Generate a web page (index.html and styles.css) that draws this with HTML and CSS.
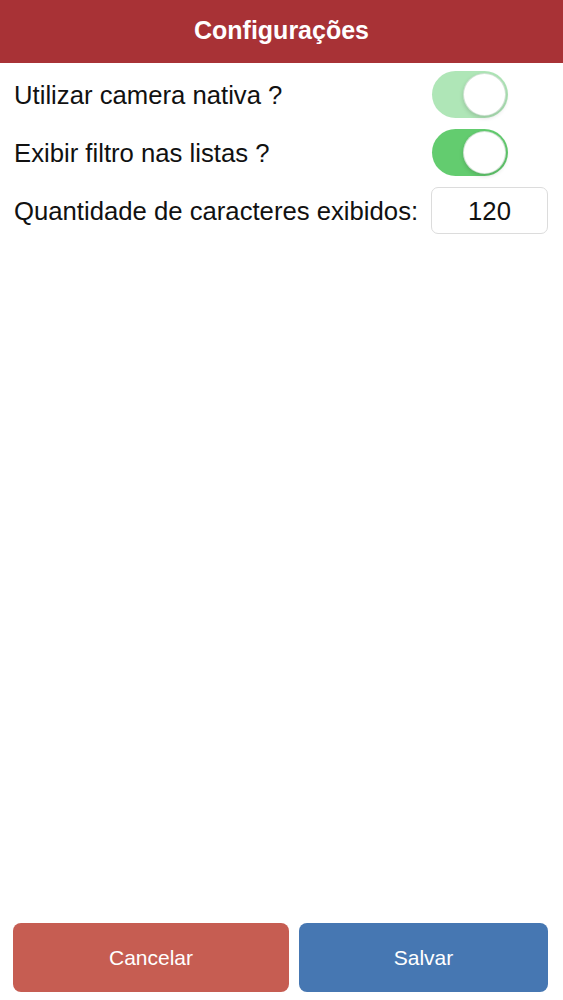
FILE: index.html
```html
<!DOCTYPE html>
<html lang="pt">
<head>
<meta charset="utf-8">
<title>Configurações</title>
<link rel="stylesheet" href="styles.css">
</head>
<body>
<div class="app">
  <header class="header">Configurações</header>
  <main class="content">
    <div class="row">
      <span class="label">Utilizar camera nativa ?</span>
      <span class="toggle toggle-light"><span class="knob"></span></span>
    </div>
    <div class="row">
      <span class="label">Exibir filtro nas listas ?</span>
      <span class="toggle toggle-on"><span class="knob"></span></span>
    </div>
    <div class="row">
      <span class="label">Quantidade de caracteres exibidos:</span>
      <span class="input">120</span>
    </div>
  </main>
  <footer class="footer">
    <button class="btn btn-cancel">Cancelar</button>
    <button class="btn btn-save">Salvar</button>
  </footer>
</div>
</body>
</html>
```

FILE: styles.css
```css
html, body {
  margin: 0;
  padding: 0;
  background: #ffffff;
}
body {
  font-family: "Liberation Sans", Arial, sans-serif;
  color: #111111;
}
.app {
  width: 563px;
  height: 1000px;
  display: flex;
  flex-direction: column;
}
.header {
  height: 63px;
  background: #a83236;
  color: #ffffff;
  font-size: 25px;
  font-weight: bold;
  display: flex;
  align-items: center;
  justify-content: center;
  padding-bottom: 2px;
  box-sizing: border-box;
}
.content {
  flex: 1;
  padding: 8px 15px 0 14px;
  display: flex;
  flex-direction: column;
  gap: 11px;
}
.row {
  height: 47px;
  display: flex;
  align-items: center;
  justify-content: space-between;
}
.label {
  font-size: 25.7px;
  padding-top: 2px;
}
.toggle {
  width: 76px;
  height: 47px;
  border-radius: 24px;
  display: flex;
  align-items: center;
  justify-content: flex-end;
  padding: 2px;
  box-sizing: border-box;
  margin-right: 40px;
}
.toggle-light {
  background: #afe6b7;
}
.toggle-on {
  background: #63cc6f;
}
.knob {
  width: 43px;
  height: 43px;
  border-radius: 50%;
  background: #ffffff;
  box-sizing: border-box;
  border: 1px solid rgba(0, 100, 20, 0.18);
  box-shadow: 0 2px 4px rgba(0, 0, 0, 0.15);
}
.input {
  width: 117px;
  height: 47px;
  border: 1px solid #dcdcdc;
  border-radius: 7px;
  box-sizing: border-box;
  display: flex;
  align-items: center;
  justify-content: center;
  font-size: 25.7px;
  padding-top: 2px;
}
.footer {
  display: flex;
  gap: 10px;
  padding: 0 15px 8px 13px;
}
.btn {
  height: 69px;
  border: none;
  border-radius: 8px;
  color: #ffffff;
  font-family: "Liberation Sans", Arial, sans-serif;
  font-size: 21px;
}
.btn-cancel {
  width: 276px;
  background: #c65d52;
}
.btn-save {
  flex: 1;
  background: #4677b2;
}
```
